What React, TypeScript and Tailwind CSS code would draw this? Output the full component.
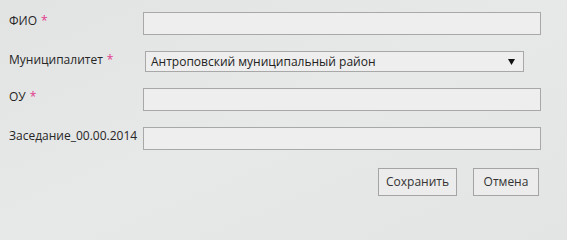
import React from 'react';

const Req = () => <span className="text-[#e2388c] ml-1">*</span>;

const App = () => {
  const fields = [
    { label: 'ФИО', required: true },
    { label: 'Муниципалитет', required: true, select: 'Антроповский муниципальный район' },
    { label: 'ОУ', required: true },
    { label: 'Заседание_00.00.2014', required: false },
  ];

  return (
    <div
      className="w-full min-w-[567px] h-screen min-h-[214px] bg-gradient-to-br from-[#e2e4e4] via-[#e7e8e8] to-[#e3e5e5] text-[#262626] text-[12px] overflow-hidden"
      style={{ fontFamily: '"Open Sans", "Noto Sans", sans-serif' }}
    >
      <div className="pt-3 pl-[9px] flex flex-col">
        {fields.map((f, i) => (
          <div key={i} className="flex items-start mb-4">
            <label className="w-[134px] leading-4 mt-[1px]">
              {f.label}
              {f.required && <Req />}
            </label>
            {f.select ? (
              <div className="ml-[2px] w-[379px] h-[21px] border border-[#a8a8a8] bg-[#eeeeee] flex items-center justify-between pl-[5px] pr-[8px] text-[12px] text-[#222]">
                <span>{f.select}</span>
                <svg width="7" height="6" viewBox="0 0 7 6" className="mt-[1px]">
                  <polygon points="0,0 7,0 3.5,6" fill="#111" />
                </svg>
              </div>
            ) : (
              <input
                type="text"
                className="w-[398px] h-[23px] border border-[#a8a8a8] bg-[#eeeeee] outline-none"
              />
            )}
          </div>
        ))}
        <div className="flex justify-end gap-4 pr-[28px] mt-[2px] w-[567px] -ml-[9px]">
          <button className="w-[79px] h-[28px] border border-[#a4a4a4] bg-[#ececec] text-[12px] text-[#333]">
            Сохранить
          </button>
          <button className="w-[66px] h-[28px] border border-[#a4a4a4] bg-[#ececec] text-[12px] text-[#333]">
            Отмена
          </button>
        </div>
      </div>
    </div>
  );
};

export default App;
